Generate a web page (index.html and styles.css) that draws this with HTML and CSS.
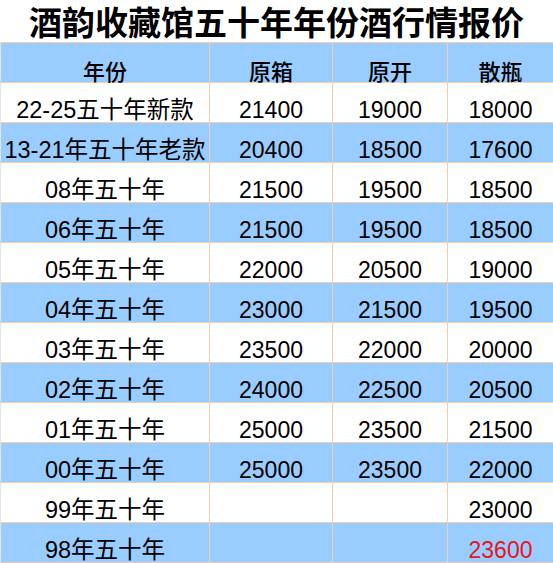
FILE: index.html
```html
<!DOCTYPE html>
<html lang="zh">
<head>
<meta charset="utf-8">
<title>酒韵收藏馆五十年年份酒行情报价</title>
<link rel="stylesheet" href="styles.css">
</head>
<body>
<div class="sheet">
  <h1 class="title">酒韵收藏馆五十年年份酒行情报价</h1>
  <table class="grid">
    <colgroup>
      <col class="c0"><col class="c1"><col class="c2"><col class="c3">
    </colgroup>
    <thead>
      <tr class="blue"><th>年份</th><th>原箱</th><th>原开</th><th>散瓶</th></tr>
    </thead>
    <tbody>
      <tr><td>22-25五十年新款</td><td>21400</td><td>19000</td><td>18000</td></tr>
      <tr class="blue"><td>13-21年五十年老款</td><td>20400</td><td>18500</td><td>17600</td></tr>
      <tr><td>08年五十年</td><td>21500</td><td>19500</td><td>18500</td></tr>
      <tr class="blue"><td>06年五十年</td><td>21500</td><td>19500</td><td>18500</td></tr>
      <tr><td>05年五十年</td><td>22000</td><td>20500</td><td>19000</td></tr>
      <tr class="blue"><td>04年五十年</td><td>23000</td><td>21500</td><td>19500</td></tr>
      <tr><td>03年五十年</td><td>23500</td><td>22000</td><td>20000</td></tr>
      <tr class="blue"><td>02年五十年</td><td>24000</td><td>22500</td><td>20500</td></tr>
      <tr><td>01年五十年</td><td>25000</td><td>23500</td><td>21500</td></tr>
      <tr class="blue"><td>00年五十年</td><td>25000</td><td>23500</td><td>22000</td></tr>
      <tr><td>99年五十年</td><td></td><td></td><td>23000</td></tr>
      <tr class="blue"><td>98年五十年</td><td></td><td></td><td class="red">23600</td></tr>
    </tbody>
  </table>
</div>
</body>
</html>
```
FILE: styles.css
```css
html, body {
  margin: 0;
  padding: 0;
  background: #ffffff;
}

.sheet {
  width: 553px;
  height: 563px;
  overflow: hidden;
  font-family: "Liberation Sans", "Noto Sans CJK SC", sans-serif;
  color: #000000;
}

.title {
  box-sizing: border-box;
  margin: 0;
  height: 42px;
  padding-top: 5.5px;
  line-height: 36.5px;
  text-align: center;
  font-family: "Liberation Sans", "Noto Sans CJK SC", sans-serif;
  font-size: 33px;
  font-weight: 700;
}

.grid {
  border-collapse: collapse;
  table-layout: fixed;
  width: 553px;
}

.c0 { width: 209px; }
.c1 { width: 123px; }
.c2 { width: 115px; }
.c3 { width: 106px; }

.grid tr {
  height: 40px;
}

.grid th,
.grid td {
  height: 39px;
  padding: 0;
  border: 1px solid #f3cdb3;
  text-align: center;
  vertical-align: bottom;
  font-size: 23px;
  line-height: 24px;
  font-weight: 400;
  white-space: nowrap;
}

.grid td:first-child {
  font-size: 23.5px;
}

.grid th {
  font-family: "Noto Sans CJK SC", sans-serif;
  font-size: 22px;
  font-weight: 500;
}

.grid tr > :first-child {
  border-left-color: #e4e4e4;
}

.blue th,
.blue td {
  background: #99ccff;
}

.red {
  color: #e8141c;
}
```
